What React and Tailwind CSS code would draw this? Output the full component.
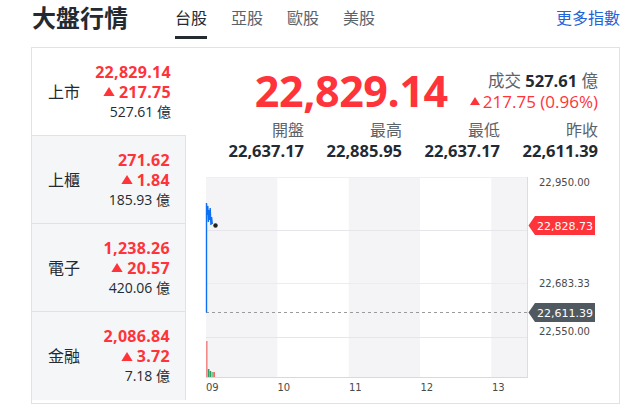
import React from 'react';

const rows = [
  { label: '上市', price: '22,829.14', chg: '217.75', vol: '527.61', active: true },
  { label: '上櫃', price: '271.62', chg: '1.84', vol: '185.93' },
  { label: '電子', price: '1,238.26', chg: '20.57', vol: '420.06' },
  { label: '金融', price: '2,086.84', chg: '3.72', vol: '7.18', last: true },
];

function Tri({ w = 11, h = 9 }) {
  return (
    <svg width={w} height={h} viewBox="0 0 10 8" className="block">
      <path d="M5 0 L10 8 L0 8 Z" fill="#ff333a" />
    </svg>
  );
}

function Row({ r }) {
  return (
    <div
      className={`h-[88px] flex items-center justify-between pl-[16px] pr-[15px] ${
        r.active ? 'bg-white' : 'bg-[#f5f6f8] border-r border-[#e2e2e2]'
      } ${r.last ? '' : 'border-b border-[#e2e2e2]'}`}
    >
      <div className="text-[16px] text-[#232a31]">{r.label}</div>
      <div className="flex flex-col items-end leading-[20px]">
        <div className="text-[16px] font-bold tracking-[0.3px] text-[#ff333a]">{r.price}</div>
        <div className="flex items-center gap-[4px] text-[16px] font-bold tracking-[0.3px] text-[#ff333a]">
          <Tri w={12} h={9} />
          <span>{r.chg}</span>
        </div>
        <div className="text-[14px] text-[#232a31]">{r.vol} 億</div>
      </div>
    </div>
  );
}

function Chart() {
  const axis = { fontFamily: 'DejaVu Sans, Verdana, sans-serif' };
  return (
    <svg width="433" height="232" className="block">
      <rect x="20" y="7" width="71.3" height="200" fill="#f4f4f6" />
      <rect x="162.7" y="7" width="71.3" height="200" fill="#f4f4f6" />
      <rect x="305.3" y="7" width="35.7" height="200" fill="#f4f4f6" />
      <line x1="20" x2="341" y1="7.5" y2="7.5" stroke="#efeff1" />
      <line x1="20" x2="341" y1="60.5" y2="60.5" stroke="#e6e6ea" />
      <line x1="20" x2="341" y1="113.5" y2="113.5" stroke="#ececef" />
      <line x1="20" x2="341" y1="167.5" y2="167.5" stroke="#e6e6ea" />
      <line x1="20" x2="341" y1="207.5" y2="207.5" stroke="#d8d8de" />
      <line x1="341.5" x2="341.5" y1="7" y2="208" stroke="#dcdce2" />
      <line x1="20" x2="341" y1="142.5" y2="142.5" stroke="#9a9a9a" strokeDasharray="3 3" />
      {/* volume */}
      <rect x="20" y="171" width="1.6" height="36" fill="#f08a8a" />
      <rect x="21.8" y="199" width="1.6" height="8" fill="#2f9e5e" />
      <rect x="23.6" y="201" width="1.6" height="6" fill="#2f9e5e" />
      <rect x="25.4" y="202" width="1.6" height="5" fill="#7fbf95" />
      <rect x="27.2" y="202" width="1.8" height="5" fill="#f06a6a" />
      {/* price line */}
      <path
        d="M20.5 142.5 L20.5 33 L21.3 45 L21.8 36 L22.4 52 L23 40 L23.6 50 L24.2 38 L24.9 55 L25.6 47 L26.3 54"
        fill="none"
        stroke="#0f6ff2"
        strokeWidth="1.4"
      />
      <circle cx="29.5" cy="55.5" r="2.2" fill="#222" />
      {/* x labels */}
      <g fontSize="10" fill="#4a4a4a" style={axis}>
        <text x="20" y="221">09</text>
        <text x="91.5" y="221">10</text>
        <text x="163" y="221">11</text>
        <text x="234.5" y="221">12</text>
        <text x="306" y="221">13</text>
      </g>
      {/* y labels */}
      <g fontSize="10" fill="#4a4a4a" style={axis}>
        <text x="353" y="15.5">22,950.00</text>
        <text x="353" y="117">22,683.33</text>
        <text x="353" y="164.5">22,550.00</text>
      </g>
      {/* tags */}
      <path d="M342.5 55.5 L349 46 H409 V65 H349 Z" fill="#ff333a" />
      <text x="351" y="59.5" fontSize="11" fill="#fff" style={axis}>22,828.73</text>
      <path d="M342.5 142.5 L349 133 H409 V152 H349 Z" fill="#515960" />
      <text x="351" y="146.5" fontSize="11" fill="#fff" style={axis}>22,611.39</text>
    </svg>
  );
}

export default function App() {
  return (
    <div className="w-[630px] h-[419px] bg-white font-['Open_Sans','Noto_Sans_CJK_TC',sans-serif] text-[#232a31] overflow-hidden">
      <div className="h-[47px] flex items-start pl-[32px] pr-[10px]">
        <div className="text-[24px] leading-[36px] font-semibold text-[#232a31]">大盤行情</div>
        <div className="ml-[47px] flex gap-[24px]">
          <div className="flex flex-col">
            <div className="text-[16px] leading-[36px] text-[#232a31]">台股</div>
            <div className="h-[3px] bg-[#232a31]" />
          </div>
          <div className="text-[16px] leading-[36px] text-[#5b636a]">亞股</div>
          <div className="text-[16px] leading-[36px] text-[#5b636a]">歐股</div>
          <div className="text-[16px] leading-[36px] text-[#5b636a]">美股</div>
        </div>
        <div className="ml-auto text-[16px] leading-[36px] text-[#2563d8]">更多指數</div>
      </div>
      <div className="ml-[31px] w-[589px] h-[357px] border border-[#e2e2e2] flex">
        <div className="w-[154px] flex flex-col">
          {rows.map((r) => (
            <Row key={r.label} r={r} />
          ))}
        </div>
        <div className="flex-1 flex flex-col">
          <div className="h-[122px] pt-[15px] pr-[21px] flex flex-col">
            <div className="h-[55px] flex items-center justify-end gap-[22px]">
              <div className="text-[43px] leading-none font-bold tracking-[-0.4px] text-[#ff333a]">22,829.14</div>
              <div className="flex flex-col items-end text-[16.5px] leading-[21px]">
                <div className="text-[#5b636a]">
                  成交 <span className="font-bold text-[#232a31]">527.61</span> 億
                </div>
                <div className="flex items-center gap-[3px] text-[17px] text-[#ff333a]">
                  <Tri w={10} h={8} />
                  <span>217.75 (0.96%)</span>
                </div>
              </div>
            </div>
            <div className="mt-[2px] ml-auto w-[392px] grid grid-cols-4 text-right">
              {[
                ['開盤', '22,637.17'],
                ['最高', '22,885.95'],
                ['最低', '22,637.17'],
                ['昨收', '22,611.39'],
              ].map(([k, v]) => (
                <div key={k} className="flex flex-col items-end">
                  <div className="text-[16px] leading-[20px] text-[#5b636a]">{k}</div>
                  <div className="text-[16.5px] leading-[22px] font-bold text-[#232a31]">{v}</div>
                </div>
              ))}
            </div>
          </div>
          <Chart />
        </div>
      </div>
    </div>
  );
}
